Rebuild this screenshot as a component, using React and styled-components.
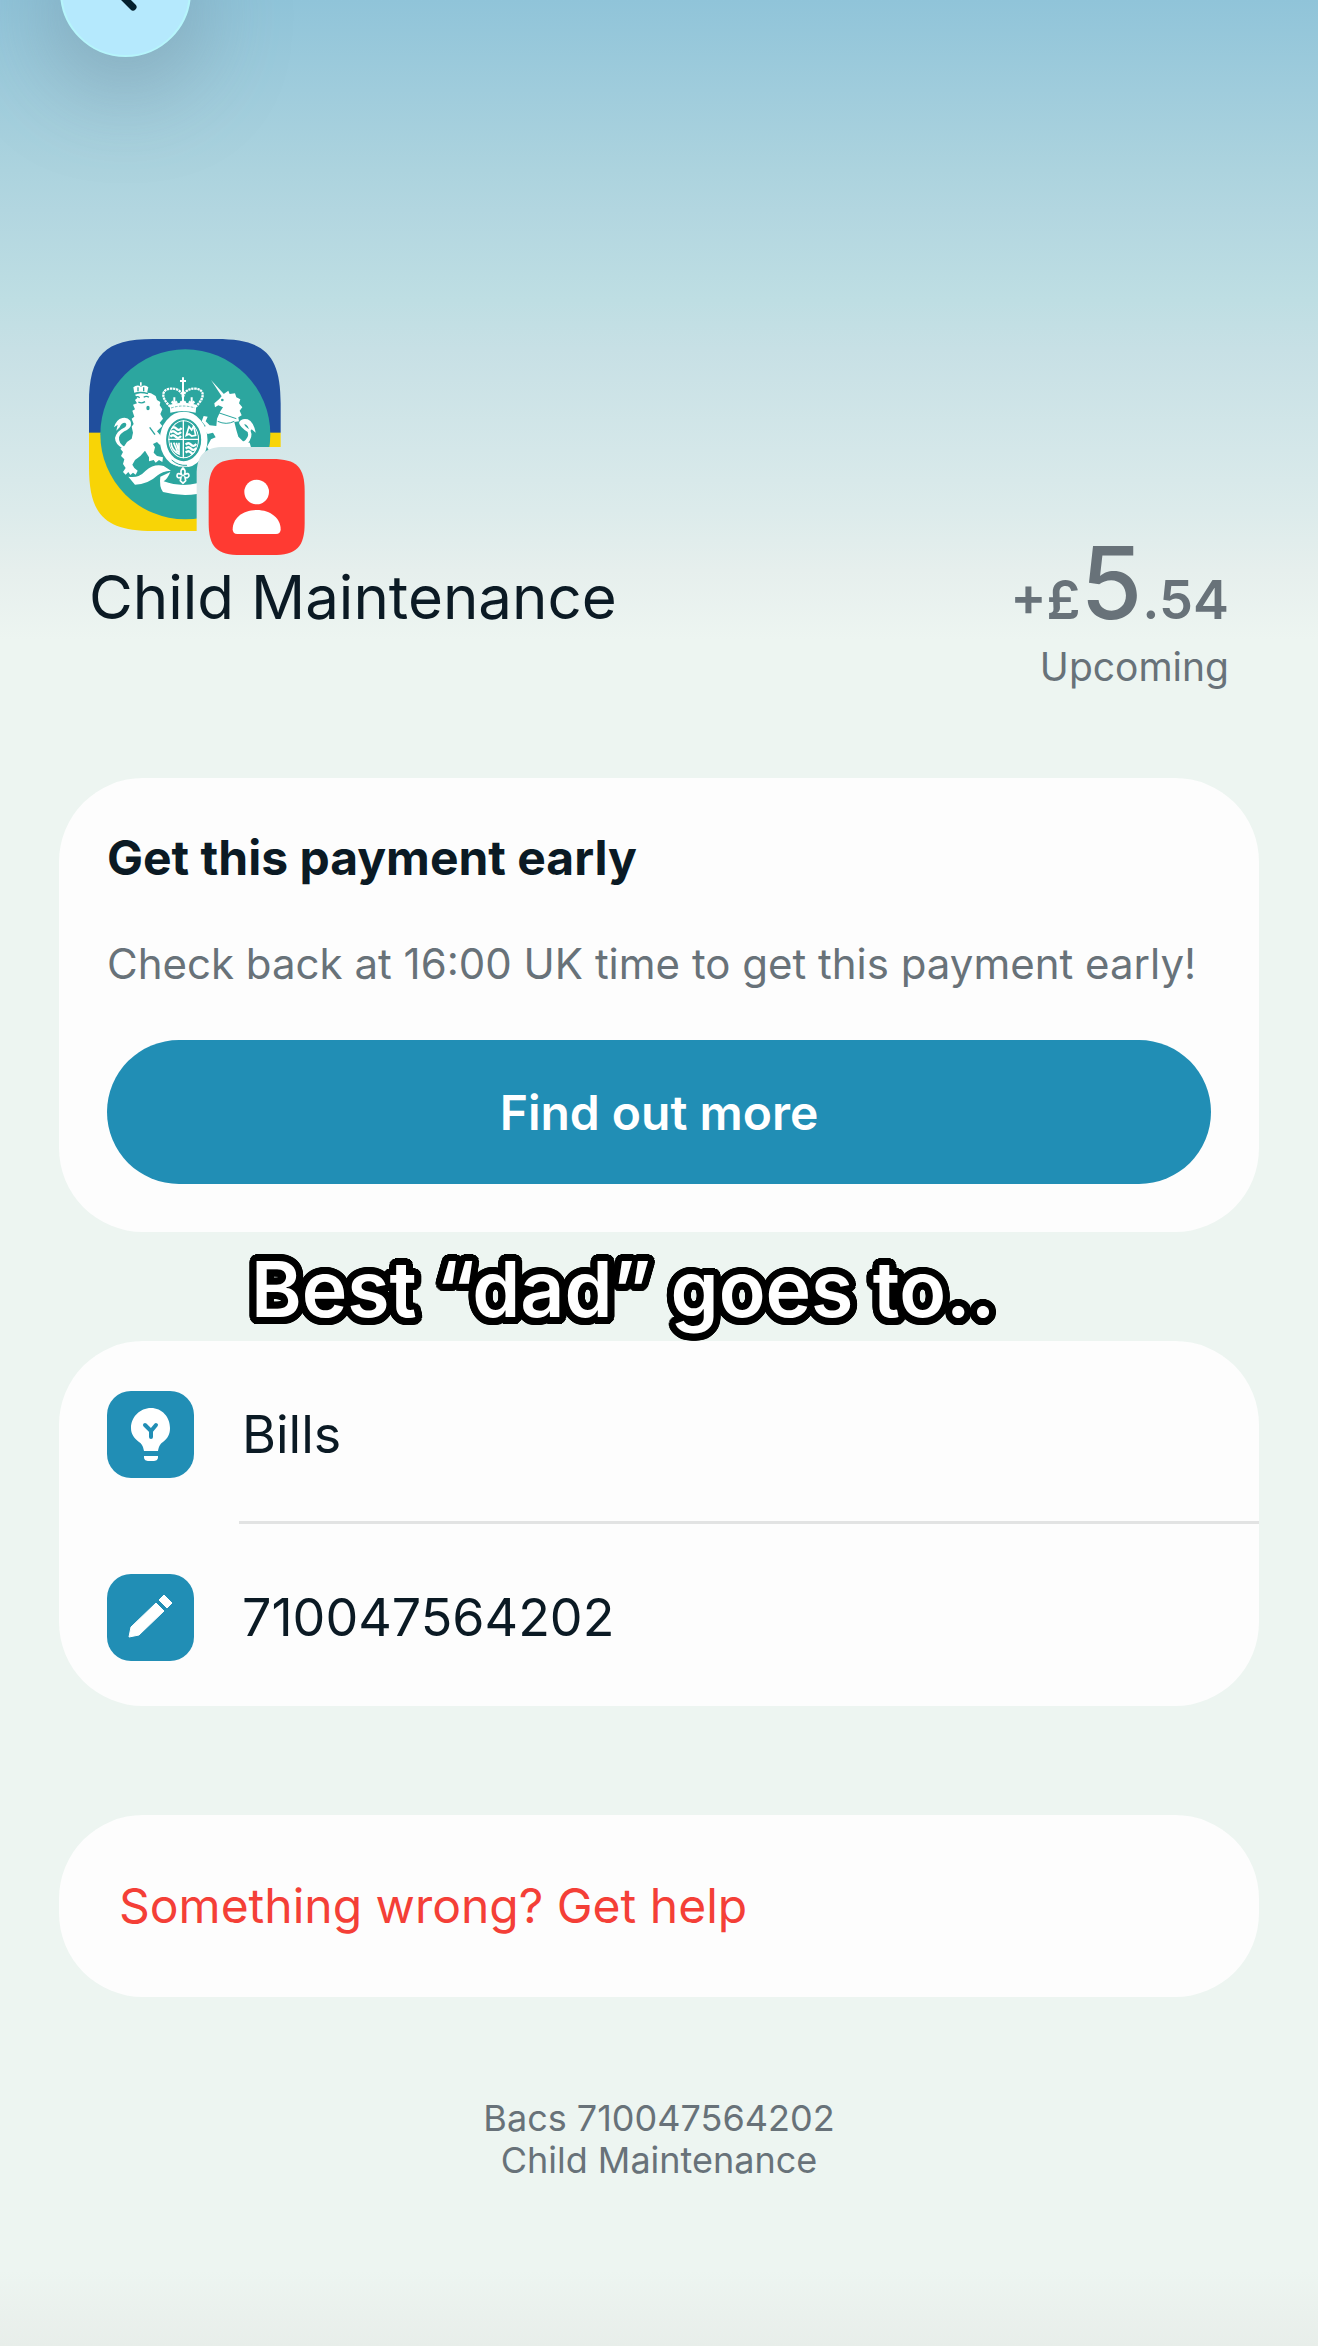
import React from "react";
import styled, { createGlobalStyle } from "styled-components";

const ink = "#0b1a24";
const muted = "#687279";
const teal = "#218eb5";

const outline = Array.from({ length: 32 }, (_, i) => {
  const angle = (i * Math.PI) / 16;
  return `${(Math.cos(angle) * 7).toFixed(1)}px ${(Math.sin(angle) * 7).toFixed(1)}px 0 #000`;
}).join(", ");

const GlobalStyle = createGlobalStyle`
  *, *::before, *::after { box-sizing: border-box; }
  body {
    margin: 0;
    background: #edf5f1;
    font-family: Inter, "Liberation Sans", sans-serif;
    color: ${ink};
  }
`;

const Page = styled.div`
  position: relative;
  display: flex;
  flex-direction: column;
  min-height: 100vh;
  overflow: hidden;
  background: linear-gradient(
      #90c4d9 0,
      #9fccdc 90px,
      #acd3de 170px,
      #b2d6e0 210px,
      #bedee3 300px,
      #c7e0e5 350px,
      #d4e7e9 450px,
      #dcebeb 510px,
      #e6efed 570px,
      #edf5f1 640px,
      #edf5f1 100%
    );
`;

const BackButton = styled.button`
  position: absolute;
  top: -74px;
  left: 60px;
  width: 131px;
  height: 131px;
  padding: 0;
  display: grid;
  place-items: center;
  border: 2px solid #b6f5fb;
  border-radius: 50%;
  background: #b5e9fd;
  color: #04202e;
  box-shadow: 0 24px 90px 10px rgba(100, 120, 135, 0.36);
`;

const Content = styled.main`
  display: flex;
  flex-direction: column;
  padding: 339px 59px 0;
`;

const Summary = styled.header`
  padding: 0 30px;
  margin-bottom: 87px;
`;

const SummaryRow = styled.div`
  display: flex;
  justify-content: space-between;
  align-items: baseline;
  padding-top: 1px;
`;

const Payee = styled.h1`
  margin: 0;
  font-size: 60px;
  line-height: 60px;
  font-weight: 400;
`;

const Amount = styled.div`
  color: ${muted};
  font-size: 54px;
  font-weight: 600;
  line-height: 54px;
`;

const Pounds = styled.span`
  font-size: 100px;
  font-weight: 500;
`;

const Status = styled.p`
  margin: 16px 0 0;
  text-align: right;
  color: ${muted};
  font-size: 39px;
  line-height: 48px;
`;

const Card = styled.section`
  border-radius: 84px;
  background: #fdfdfd;
`;

const OfferCard = styled(Card)`
  display: flex;
  flex-direction: column;
  gap: 48px;
  padding: 50px 48px 48px;
`;

const OfferTitle = styled.h2`
  margin: 0;
  font-size: 48px;
  line-height: 60px;
  font-weight: 700;
`;

const OfferText = styled.p`
  margin: 0;
  color: ${muted};
  font-size: 42px;
  line-height: 56px;
  white-space: nowrap;
`;

const PrimaryButton = styled.button`
  height: 144px;
  border: 0;
  border-radius: 72px;
  background: ${teal};
  color: #fff;
  font: inherit;
  font-size: 48px;
  font-weight: 600;
`;

const Caption = styled.p`
  position: relative;
  z-index: 1;
  margin: 0;
  padding-left: 192px;
  color: #fff;
  font-size: 77px;
  line-height: 114px;
  height: 109px;
  font-weight: 600;
  white-space: nowrap;
  text-shadow: ${outline};
`;

const DetailsCard = styled(Card)`
  padding-bottom: 2px;
`;

const DetailRow = styled.div`
  display: flex;
  align-items: center;
  gap: 48px;
  padding: 50px 48px 43px;
  font-size: 52px;
  line-height: 60px;
`;

const Divider = styled.hr`
  height: 3px;
  margin: 0 0 0 180px;
  border: 0;
  background: #e2e3e3;
`;

const IconTile = styled.span`
  display: grid;
  place-items: center;
  width: 87px;
  height: 87px;
  border-radius: 24px;
  background: ${teal};
`;

const HelpCard = styled(Card)`
  margin-top: 109px;
  padding: 61px 60px;
`;

const HelpLink = styled.a`
  display: block;
  color: #f43f37;
  font-size: 48px;
  line-height: 60px;
  text-decoration: none;
`;

const Reference = styled.footer`
  margin: 100px 0 0;
  text-align: center;
  color: ${muted};
  font-size: 36px;
  line-height: 42px;
`;

const BottomShade = styled.div`
  height: 76px;
  margin-top: auto;
  background: linear-gradient(rgba(232, 238, 234, 0), #e8eeea);
`;

const Logo = styled.svg`
  display: block;
  width: 216px;
  height: 216px;
`;

function LionSide() {
  return (
    <g fill="#fff">
      <path d="M196 224 L203 234 L196 240 L202 250 L190 254 L196 268 L188 272 L194 290 L186 296 L192 312 L186 320 L190 338 L186 356 L172 366 L164 378 L152 386 L160 396 L154 408 L164 418 L160 432 L168 444 L160 456 L168 464 L176 456 L182 465 L190 458 L198 464 L204 452 L194 444 L188 434 L196 420 L212 408 L226 392 L238 412 L238 424 L252 420 L258 428 L268 420 L278 426 L280 412 L262 408 L252 398 L256 382 L250 372 L262 366 L270 374 L286 368 L288 356 L274 348 L262 334 L278 318 L270 308 L280 296 L272 282 L278 268 L270 256 L272 246 L262 240 L258 228 L244 220 L220 216 Z" />
      <path d="M194 220 H232 L236 202 Q226 192 214 200 Q202 192 191 202 Z M211 187 h5 v10 h-5z" />
      <path d="M166 382 Q146 370 148 352 Q152 338 172 330 Q190 318 182 302 Q172 290 158 294 Q140 298 133 322 L144 314 L140 332 L150 322 Q154 308 166 308 Q174 312 166 322 Q142 332 136 354 Q136 372 160 386 Z" />
      <path d="M176 470 Q206 476 228 452 Q254 430 282 438 L304 452 Q276 454 264 466 Q234 494 196 494 Z" />
      <path d="M272 470 L302 456 Q294 476 282 484 Q330 502 382 490 L382 522 Q334 530 280 516 Q268 500 272 470 Z" />
    </g>
  );
}

function UnicornSide() {
  return (
    <g fill="#fff">
      <path d="M424 180 L466 226 L458 232 Z" />
      <path d="M462 222 L476 212 L480 222 L496 220 L500 232 L512 238 L508 250 L518 262 L510 272 L516 286 L506 292 L508 304 L494 306 L500 330 L506 350 L520 364 L540 368 L544 382 L440 384 L420 396 L412 380 L424 358 L438 352 L430 338 L414 342 L400 326 L408 318 L396 304 L402 288 L414 290 L408 304 L420 316 L440 318 L442 296 L452 274 L460 262 L446 256 L436 262 L434 250 L448 238 Z" />
      <path d="M520 366 Q540 352 534 336 Q510 320 508 308 Q514 294 534 298 Q552 306 558 338 L546 328 L540 336 Q536 314 524 312 Q524 320 542 330 Q552 352 532 372 Z" />
      <path d="M446 278 L500 296 M440 286 l-6 -4 M444 304 Q470 316 494 304" fill="none" stroke="#2ca69f" strokeWidth="3" />
    </g>
  );
}

function CrownAndShield() {
  return (
    <g>
      <g fill="none" stroke="#fff">
        <path d="M302 260 C270 230 278 208 302 206 C324 204 338 216 340 232 C342 216 356 204 378 206 C402 208 410 230 378 260" strokeWidth="7" strokeDasharray="7 2" />
        <path d="M340 196 V252 M314 232 V254 M366 232 V254" strokeWidth="6" />
        <path d="M306 244 l8 8 8 -8 M332 244 l8 8 8 -8 M358 244 l8 8 8 -8" strokeWidth="7" />
      </g>
      <path d="M337 172 h6 v8 h6 v6 h-6 v14 h-6 v-14 h-6 v-6 h6z M300 254 Q340 242 380 254 L378 278 Q340 268 302 278 Z" fill="#fff" />
      <path d="M304 264 Q340 252 376 264" fill="none" stroke="#2ca69f" strokeWidth="2" strokeDasharray="8 4" />
      <ellipse cx="342" cy="359" rx="62" ry="74" fill="none" stroke="#fff" strokeWidth="19" />
      <ellipse cx="342" cy="359" rx="51" ry="62" fill="#2ca69f" />
      <clipPath id="shield"><ellipse cx="342" cy="358" rx="46" ry="57" /></clipPath>
      <g clipPath="url(#shield)" fill="none" stroke="#fff">
        <ellipse cx="342" cy="358" rx="45" ry="56" strokeWidth="4" />
        <path d="M341 300 V418 M294 358 H390" strokeWidth="4" />
        <path d="M304 326 q8 -8 16 0 t16 -2 M302 338 q8 -8 16 0 t16 -2 M302 350 q8 -8 16 0 t16 -2 M348 374 q8 -8 16 0 t16 -2 M348 386 q8 -8 16 0 t16 -2 M348 398 q8 -8 16 0 t16 -2" strokeWidth="7" />
        <path d="M350 346 l8 -26 l8 10 l6 -12 l6 28 l-12 2 -8 -6 z M304 368 Q306 392 328 402 V368 M312 368 L324 396 M320 368 L326 388" strokeWidth="5" />
      </g>
      <path d="M306 420 Q326 438 352 436 M300 432 Q326 446 356 442" fill="none" stroke="#2ca69f" strokeWidth="3" />
      <path d="M340 444 Q350 452 344 464 Q358 456 358 468 Q354 476 346 472 L348 482 L340 490 L332 482 L334 472 Q324 476 322 468 Q322 456 336 464 Q330 452 340 444 Z" fill="none" stroke="#fff" strokeWidth="5" />
    </g>
  );
}

function PayeeLogo() {
  return (
    <Logo viewBox="58 57 648 648" role="img" aria-label="Child Maintenance logo">
      <defs>
        <mask id="cutout">
          <path fill="#fff" d="M58 250 C58 105 106 57 250 57 H441 C585 57 633 105 633 250 V381 H466 C404 381 381 404 381 466 V633 H250 C106 633 58 585 58 441 Z" />
        </mask>
      </defs>
      <g mask="url(#cutout)">
        <rect x="58" y="57" width="576" height="282" fill="#204e9d" />
        <rect x="58" y="338" width="576" height="296" fill="#f8d406" />
        <circle cx="347" cy="343" r="255" fill="#2ca69f" />
        <LionSide />
        <path d="M196 232 q8 -5 14 1 M222 232 q8 -6 16 0 M206 246 q10 6 20 -1 M240 322 l16 22 M192 221 Q213 214 235 221 M205 202 v12 M222 202 v12" fill="none" stroke="#2ca69f" strokeWidth="4" />
        <ellipse cx="235" cy="264" rx="5" ry="7" fill="#2ca69f" />
        <UnicornSide />
        <circle cx="458" cy="240" r="4" fill="#2ca69f" />
        <CrownAndShield />
      </g>
      <path fill="#ff3a32" d="M417 514 C417 441 441 417 514 417 H608 C681 417 705 441 705 514 V608 C705 681 681 705 608 705 H514 C441 705 417 681 417 608 Z" />
      <circle cx="561" cy="516" r="37" fill="#fff" />
      <path fill="#fff" d="M489 628 C489 596 518 570 561 570 C604 570 633 596 633 628 Q633 642 619 642 H503 Q489 642 489 628 Z" />
    </Logo>
  );
}

function BulbIcon() {
  return (
    <svg width="87" height="87" viewBox="0 0 87 87" aria-hidden="true">
      <path fill="#fff" d="M44 17 C55 17 63 26 63 37 C63 43 61 47 56 51 C53 53 52 55 51 60 H37 C36 55 35 53 32 51 C27 47 24 43 24 37 C24 26 33 17 44 17 Z M37 65 H51 V66 C51 69 49 70 46 70 H42 C39 70 37 69 37 66 Z" />
      <path d="M38 34 L44 40 L49 34 M44 40 V46" fill="none" stroke={teal} strokeWidth="4" strokeLinecap="round" />
    </svg>
  );
}

function PencilIcon() {
  return (
    <svg width="87" height="87" viewBox="0 0 87 87" aria-hidden="true">
      <path fill="#fff" d="M49 29 L57 37 L32 61 L22 63 L24 53 Z M52 26 L57 21 L65 29 L60 34 Z" stroke="#fff" strokeWidth="1" strokeLinejoin="round" />
    </svg>
  );
}

export default function App() {
  return (
    <>
      <GlobalStyle />
      <Page>
        <BackButton type="button" aria-label="Back">
          <svg width="48" height="48" viewBox="0 0 48 48" fill="none" stroke="currentColor" strokeWidth="7" strokeLinecap="round" strokeLinejoin="round" aria-hidden="true">
            <path d="M31 9 L16 24 L31 39" />
          </svg>
        </BackButton>
        <Content>
          <Summary>
            <PayeeLogo />
            <SummaryRow>
              <Payee>Child Maintenance</Payee>
              <Amount>+£<Pounds>5</Pounds>.54</Amount>
            </SummaryRow>
            <Status>Upcoming</Status>
          </Summary>
          <OfferCard>
            <OfferTitle>Get this payment early</OfferTitle>
            <OfferText>Check back at 16:00 UK time to get this payment early!</OfferText>
            <PrimaryButton type="button">Find out more</PrimaryButton>
          </OfferCard>
          <Caption>Best “dad” goes to..</Caption>
          <DetailsCard>
            <DetailRow>
              <IconTile><BulbIcon /></IconTile>
              <span>Bills</span>
            </DetailRow>
            <Divider />
            <DetailRow>
              <IconTile><PencilIcon /></IconTile>
              <span>710047564202</span>
            </DetailRow>
          </DetailsCard>
          <HelpCard>
            <HelpLink href="#help">Something wrong? Get help</HelpLink>
          </HelpCard>
          <Reference>
            Bacs 710047564202
            <br />
            Child Maintenance
          </Reference>
        </Content>
        <BottomShade />
      </Page>
    </>
  );
}
